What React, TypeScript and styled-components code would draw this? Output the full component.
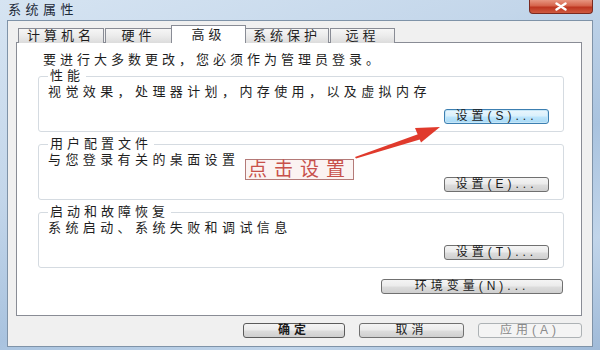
import styled, { createGlobalStyle, css } from "styled-components"

const GlobalStyle = createGlobalStyle`
    html, body {
        margin: 0;
        padding: 0;
    }
    body {
        width: 600px;
        height: 350px;
        overflow: hidden;
        font-family: "Liberation Sans", "Noto Sans CJK SC", sans-serif;
        color: #1e1e1e;
    }
`

interface Group {
    title: string
    desc: string
    button: string
}

const groups: Group[] = [
    { title: "性能", desc: "视觉效果，处理器计划，内存使用，以及虚拟内存", button: "设置(S)..." },
    { title: "用户配置文件", desc: "与您登录有关的桌面设置", button: "设置(E)..." },
    { title: "启动和故障恢复", desc: "系统启动、系统失败和调试信息", button: "设置(T)..." },
]

const tabs = [
    { name: "计算机名", width: 86 },
    { name: "硬件", width: 67 },
    { name: "高级", width: 75, active: true },
    { name: "系统保护", width: 84 },
    { name: "远程", width: 65 },
]

function App() {
    return (
        <>
            <GlobalStyle />
            <Window>
                <TitleBar>
                    <Title>系统属性</Title>
                    <CloseButton>
                        <svg width="14" height="9" viewBox="0 0 14 9">
                            <path d="M2.5 1.5 L11.5 7.5 M11.5 1.5 L2.5 7.5" stroke="#fff" strokeWidth="2.4" strokeLinecap="round" />
                        </svg>
                    </CloseButton>
                </TitleBar>

                <Client>
                    <TabStrip>
                        {tabs.map((t) => (
                            <Tab key={t.name} $width={t.width} $active={!!t.active}>
                                {t.name}
                            </Tab>
                        ))}
                    </TabStrip>

                    <Panel>
                        <Notice>要进行大多数更改，您必须作为管理员登录。</Notice>
                        {groups.map((g, i) => (
                            <GroupBox key={g.title} $first={i === 0}>
                                <Legend>{g.title}</Legend>
                                <Desc>{g.desc}</Desc>
                                <ButtonRow>
                                    <Button $width={105} $variant={i === 0 ? "hot" : "normal"}>
                                        {g.button}
                                    </Button>
                                </ButtonRow>
                            </GroupBox>
                        ))}
                        <EnvRow>
                            <Button $width={182}>环境变量(N)...</Button>
                        </EnvRow>
                    </Panel>

                    <Footer>
                        <Button $width={102} $variant="default">确定</Button>
                        <Button $width={105}>取消</Button>
                        <Button $width={104} $variant="disabled">应用(A)</Button>
                    </Footer>
                </Client>

                <Arrow width="600" height="350" viewBox="0 0 600 350">
                    <polygon points="355,157 420,133.5 421.5,139 356,158.5" fill="#e03a2c" />
                    <polygon points="440,127 415,128 421,142.5" fill="#e03a2c" />
                </Arrow>
                <Callout>点击设置</Callout>
            </Window>
        </>
    )
}

export default App

const Window = styled.div`
    position: relative;
    width: 600px;
    height: 350px;
    box-sizing: border-box;
    padding: 0 7px 3px 7px;
    display: flex;
    flex-direction: column;
    background: linear-gradient(160deg, #d6e4f2 0%, #c3d6ea 35%, #a9c3df 60%, #c1d5ea 80%, #9fbad8 100%);
`

const TitleBar = styled.div`
    height: 20px;
    display: flex;
    justify-content: space-between;
    align-items: flex-start;
`

const Title = styled.div`
    padding-left: 1px;
    line-height: 20px;
    font-size: 13px;
    letter-spacing: 4.5px;
    color: #1e2a3a;
`

const CloseButton = styled.div`
    width: 64px;
    height: 14px;
    box-sizing: border-box;
    border: 1px solid #7a2a20;
    border-top: none;
    border-radius: 0 0 4px 4px;
    background: linear-gradient(180deg, #e79580 0%, #d5634b 45%, #bd3520 55%, #cf5a40 100%);
    display: flex;
    justify-content: center;
    align-items: center;
`

const Client = styled.div`
    flex: 1;
    box-sizing: border-box;
    border: 1px solid #7f93a8;
    background: #f0f0f0;
    padding: 4px 10px 8px 8px;
    display: flex;
    flex-direction: column;
`

const TabStrip = styled.div`
    height: 18px;
    margin: 0 0 -1px 2px;
    display: flex;
    align-items: flex-end;
    position: relative;
    z-index: 1;
`

const Tab = styled.div<{ $width: number; $active: boolean }>`
    width: ${(p) => p.$width}px;
    height: 15px;
    box-sizing: border-box;
    border: 1px solid #898c95;
    border-bottom: none;
    margin-right: 1px;
    font-size: 13px;
    line-height: 14px;
    letter-spacing: 4px;
    text-align: center;
    background: linear-gradient(180deg, #f6f6f6 0%, #ebebeb 50%, #dcdcdc 100%);
    ${(p) =>
        p.$active &&
        css`
            height: 18px;
            margin: 0 -1px 0 -2px;
            padding-top: 1px;
            background: #ffffff;
            line-height: 15px;
        `}
`

const Panel = styled.div`
    height: 274px;
    box-sizing: border-box;
    border: 1px solid #898c95;
    background: #ffffff;
    padding: 8px 17px 0 21px;
`

const Notice = styled.div`
    margin-left: 5px;
    font-size: 13px;
    line-height: 17px;
    letter-spacing: 4px;
    white-space: nowrap;
`

const GroupBox = styled.fieldset<{ $first: boolean }>`
    margin: ${(p) => (p.$first ? 0 : 4)}px 0 0 0;
    padding: 0 14px 7px 9px;
    border: 1px solid #d5dbe1;
    border-radius: 3px;
    min-width: 0;
`

const Legend = styled.legend`
    padding: 0 2px;
    font-size: 13px;
    line-height: 16px;
    letter-spacing: 4px;
`

const Desc = styled.div`
    font-size: 13px;
    line-height: 16px;
    letter-spacing: 4.4px;
    white-space: nowrap;
`

const ButtonRow = styled.div`
    margin-top: 9px;
    display: flex;
    justify-content: flex-end;
`

const EnvRow = styled.div`
    margin: 11px 1px 0 0;
    display: flex;
    justify-content: flex-end;
`

const Footer = styled.div`
    margin-top: 7px;
    display: flex;
    justify-content: flex-end;
    gap: 14px;
`

type Variant = "normal" | "hot" | "default" | "disabled"

const Button = styled.button<{ $width: number; $variant?: Variant }>`
    width: ${(p) => p.$width}px;
    height: 15px;
    box-sizing: border-box;
    padding: 0;
    border: 1px solid #707070;
    border-radius: 3px;
    font-family: inherit;
    font-size: 12px;
    line-height: 13px;
    letter-spacing: 4px;
    color: #1a1a1a;
    text-align: center;
    background: linear-gradient(180deg, #f4f4f4 0%, #ebebeb 48%, #dddddd 52%, #cfcfcf 100%);
    ${(p) =>
        p.$variant === "hot" &&
        css`
            border-color: #3c7fb1;
            background: linear-gradient(180deg, #eaf6fd 0%, #d9f0fc 48%, #bee6fd 52%, #a7d9f5 100%);
            box-shadow: inset 0 0 0 1px #c6e6f7;
        `}
    ${(p) =>
        p.$variant === "default" &&
        css`
            border-color: #5b5b5b;
            font-weight: 700;
        `}
    ${(p) =>
        p.$variant === "disabled" &&
        css`
            border-color: #adb2b5;
            background: #f4f4f4;
            color: #8a8a8a;
        `}
`

const Arrow = styled.svg`
    position: absolute;
    left: 0;
    top: 0;
    pointer-events: none;
`

const Callout = styled.div`
    position: absolute;
    left: 245px;
    top: 159px;
    width: 109px;
    height: 21px;
    box-sizing: border-box;
    border: 1px solid #b47a78;
    background: #fbf3f2;
    color: #c8504a;
    font-size: 19px;
    line-height: 19px;
    letter-spacing: 7px;
    padding-left: 2px;
    white-space: nowrap;
`
